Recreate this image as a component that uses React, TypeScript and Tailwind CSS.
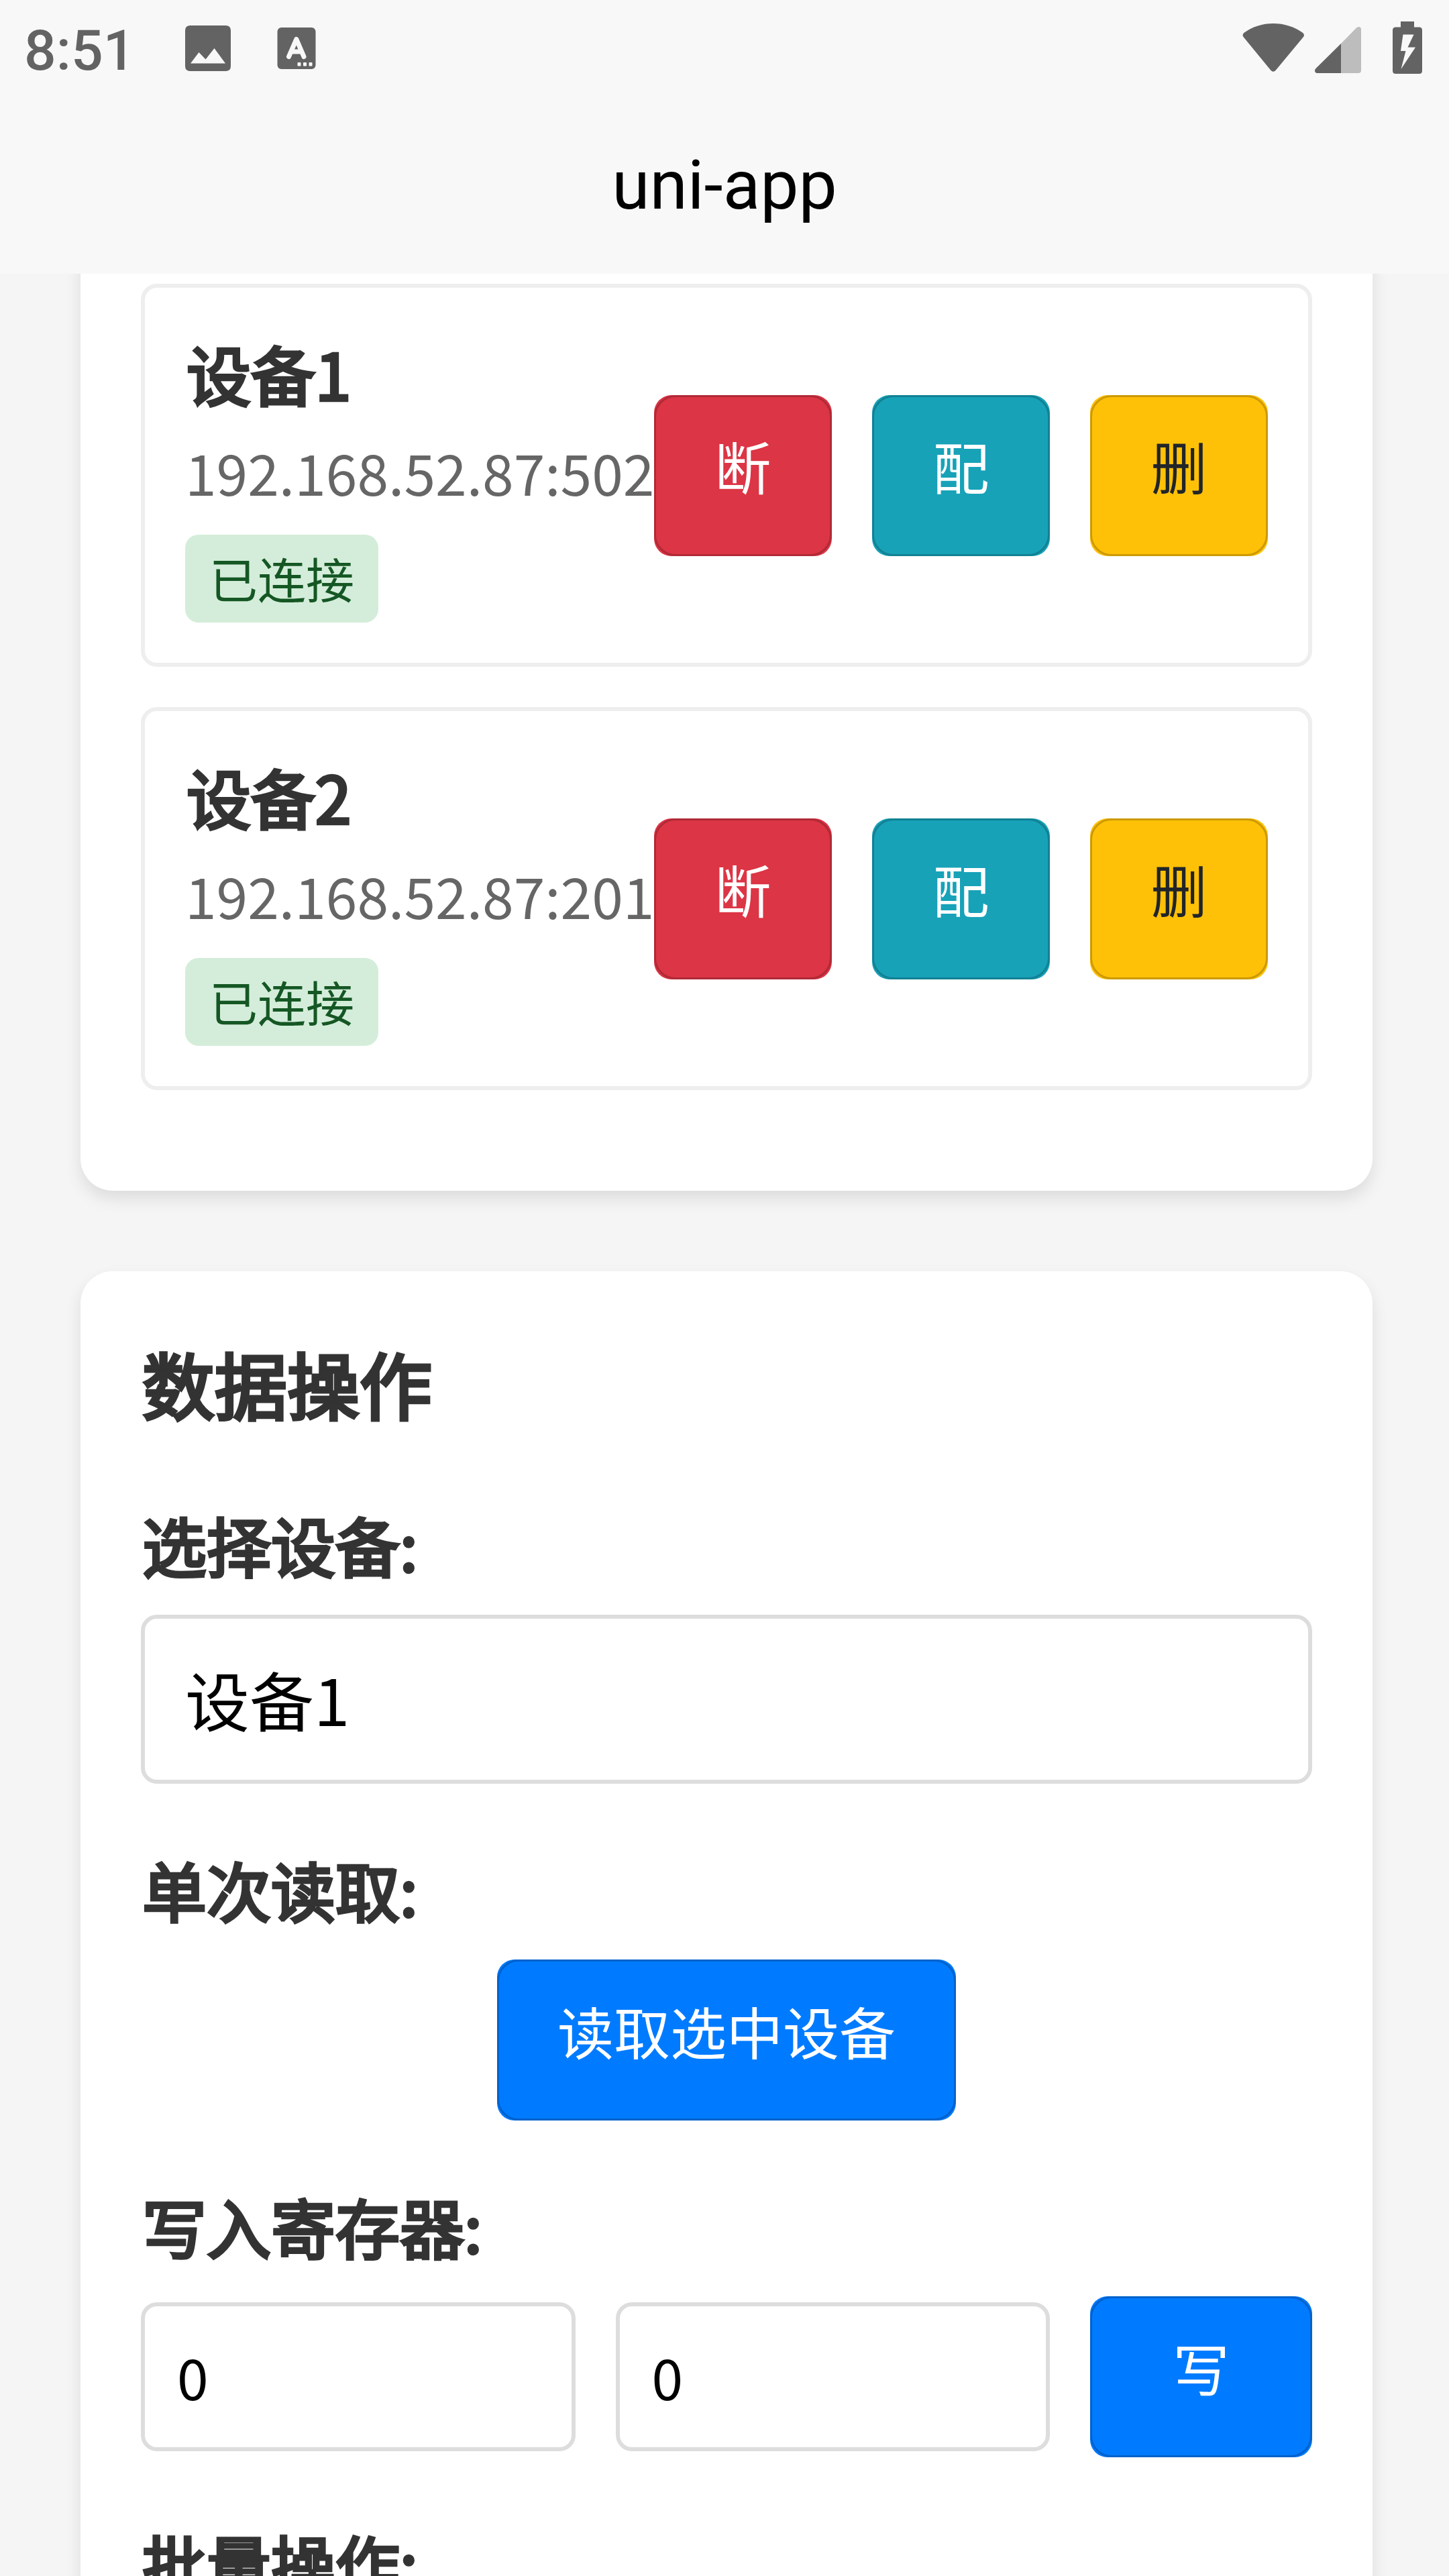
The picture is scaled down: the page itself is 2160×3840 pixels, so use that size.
import type { ReactNode } from "react";

function BoldText({ className = "", children }: { className?: string; children: ReactNode }) {
  return (
    <div
      className={`pl-[2px] font-normal whitespace-nowrap text-[#333333] [-webkit-text-stroke:0.047em_#333333] ${className}`}
    >
      {children}
    </div>
  );
}

function Label({ children }: { children: ReactNode }) {
  return <BoldText className="mt-[90px] text-[96px] leading-[134px]">{children}</BoldText>;
}

function Button({ className, children }: { className: string; children: ReactNode }) {
  return (
    <button
      className={`relative flex h-[240px] shrink-0 items-center justify-center rounded-[26px] pb-[29px] text-[84px] leading-[120px] whitespace-nowrap after:absolute after:inset-0 after:rounded-[32px] after:border-[3px] after:border-black/20 after:content-[''] ${className}`}
    >
      {children}
    </button>
  );
}

function DeviceItem({ name, address }: { name: string; address: string }) {
  return (
    <div className="flex h-[571px] items-center justify-between rounded-[24px] border-[6px] border-[#eeeeee] p-[60px]">
      <div className="w-[699px] shrink-0">
        <BoldText className="text-[96px] leading-[134px]">{name}</BoldText>
        <div className="mt-[13px] text-[84px] leading-[134px] whitespace-nowrap text-[#666666]">{address}</div>
        <div className="mt-[27px] flex h-[131px] w-[288px] items-center justify-center rounded-[20px] bg-[#d4edda] pb-[4px] text-[72px] leading-[100px] whitespace-nowrap text-[#155724]">
          已连接
        </div>
      </div>
      <div className="flex gap-[60px]">
        <Button className="w-[265px] bg-[#dc3545] text-white">断</Button>
        <Button className="w-[265px] bg-[#17a2b8] text-white">配</Button>
        <Button className="w-[265px] bg-[#ffc107] text-[#212529]">删</Button>
      </div>
    </div>
  );
}

function NumberField({ value }: { value: string }) {
  return (
    <div className="flex h-[222px] flex-1 items-center rounded-[24px] border-[6px] border-[#dddddd] bg-white pb-[3px] pl-[48px] text-[84px] leading-[120px] text-black">
      {value}
    </div>
  );
}

function StatusBar() {
  return (
    <div className="flex h-[144px] justify-between text-[#636363]">
      <div className="flex">
        <div className="flex w-[260px] items-center pt-[8px] pl-[36px] font-['Roboto'] text-[84px] leading-none font-medium">
          8:51
        </div>
        <svg className="h-[144px] w-[100px]" viewBox="260 0 100 144" fill="currentColor">
          <path
            fillRule="evenodd"
            d="M283.500 38H336.500Q344 38 344 45.500V98.500Q344 106 336.500 106H283.500Q276 106 276 98.500V45.500Q276 38 283.500 38ZM284 94.500H336L319.500 72L306.500 88.500L296.500 78Z"
          />
        </svg>
        <svg className="ml-[40px] h-[144px] w-[90px]" viewBox="400 0 90 144">
          <rect x="413.500" y="41" width="57" height="62" rx="6" fill="currentColor" />
          <path
            d="M430.500 84.500L441.800 58.500L453 84.500M434 77H449.500"
            fill="none"
            stroke="#f8f8f8"
            strokeWidth="7"
            strokeLinecap="round"
            strokeLinejoin="round"
          />
          <g fill="#f8f8f8">
            <rect x="443.500" y="93" width="5" height="5.500" rx="1" />
            <rect x="452" y="93" width="5" height="5.500" rx="1" />
            <rect x="460.500" y="93" width="5" height="5.500" rx="1" />
          </g>
        </svg>
      </div>
      <div className="flex">
        <svg className="h-[144px] w-[110px]" viewBox="1840 0 110 144" fill="currentColor">
          <path d="M1853.500 55Q1851 51.500 1855 48.500Q1874 35 1898 35Q1922 35 1941.500 48.500Q1945.500 51.500 1943 55L1901.500 105Q1898 108.500 1894.500 105Z" />
        </svg>
        <svg className="h-[144px] w-[100px]" viewBox="1950 0 100 144" fill="currentColor">
          <path d="M1999 65L2022 41.500Q2024 39.500 2026 40Q2029 40.500 2029 43.500V105Q2029 109 2025 109H1999Z" fill="#bdbdbd" />
          <path d="M1999 65V109H1963.500Q1960.500 109 1960 106Q1959.500 104 1961.500 102Z" />
        </svg>
        <svg className="h-[144px] w-[110px]" viewBox="2050 0 110 144" fill="currentColor">
          <path
            fillRule="evenodd"
            d="M2088 32H2108V40.500H2115.500Q2120 40.500 2120 45V105.500Q2120 110 2115.500 110H2080.500Q2076 110 2076 105.500V45Q2076 40.500 2080.500 40.500H2088ZM2091.500 51.500L2088 76H2095.500L2088.500 103L2110 70.500H2098.500L2107.500 51.500Z"
          />
        </svg>
      </div>
    </div>
  );
}

export default function App() {
  return (
    <div className="flex h-[3840px] w-[2160px] flex-col overflow-hidden bg-[#f5f5f5] font-['Noto_Sans_CJK_SC',sans-serif]">
      <header className="relative z-10 h-[408px] shrink-0 bg-[#f8f8f8]">
        <StatusBar />
        <div className="flex h-[264px] items-center justify-center font-['Roboto'] text-[102px] leading-none text-black">
          uni-app
        </div>
      </header>

      <main className="-mt-[100px] h-[3532px] shrink-0 overflow-hidden pr-[114px] pl-[120px]">
        <section className="flex flex-col gap-[60px] rounded-b-[48px] bg-white px-[90px] pt-[115px] pb-[150px] shadow-[0_12px_24px_rgba(0,0,0,0.1)]">
          <DeviceItem name="设备1" address="192.168.52.87:502" />
          <DeviceItem name="设备2" address="192.168.52.87:201" />
        </section>

        <section className="mt-[120px] rounded-[48px] bg-white px-[90px] pt-[90px] pb-[90px] shadow-[0_12px_24px_rgba(0,0,0,0.1)]">
          <BoldText className="text-[108px] leading-[152px]">数据操作</BoldText>

          <div className="pt-[8px]">
            <Label>选择设备:</Label>
            <div className="mt-[38px] flex h-[252px] items-center rounded-[24px] border-[6px] border-[#dddddd] px-[60px] pb-[3px] text-[96px] leading-[134px] text-black">
              设备1
            </div>
          </div>

          <Label>单次读取:</Label>
          <div className="mt-[38px] flex justify-center">
            <Button className="w-[684px] bg-[#007bff] text-white">读取选中设备</Button>
          </div>

          <Label>写入寄存器:</Label>
          <div className="mt-[38px] flex items-center gap-[60px]">
            <NumberField value="0" />
            <NumberField value="0" />
            <Button className="w-[331px] bg-[#007bff] text-white">写</Button>
          </div>

          <Label>批量操作:</Label>
        </section>
      </main>
    </div>
  );
}
